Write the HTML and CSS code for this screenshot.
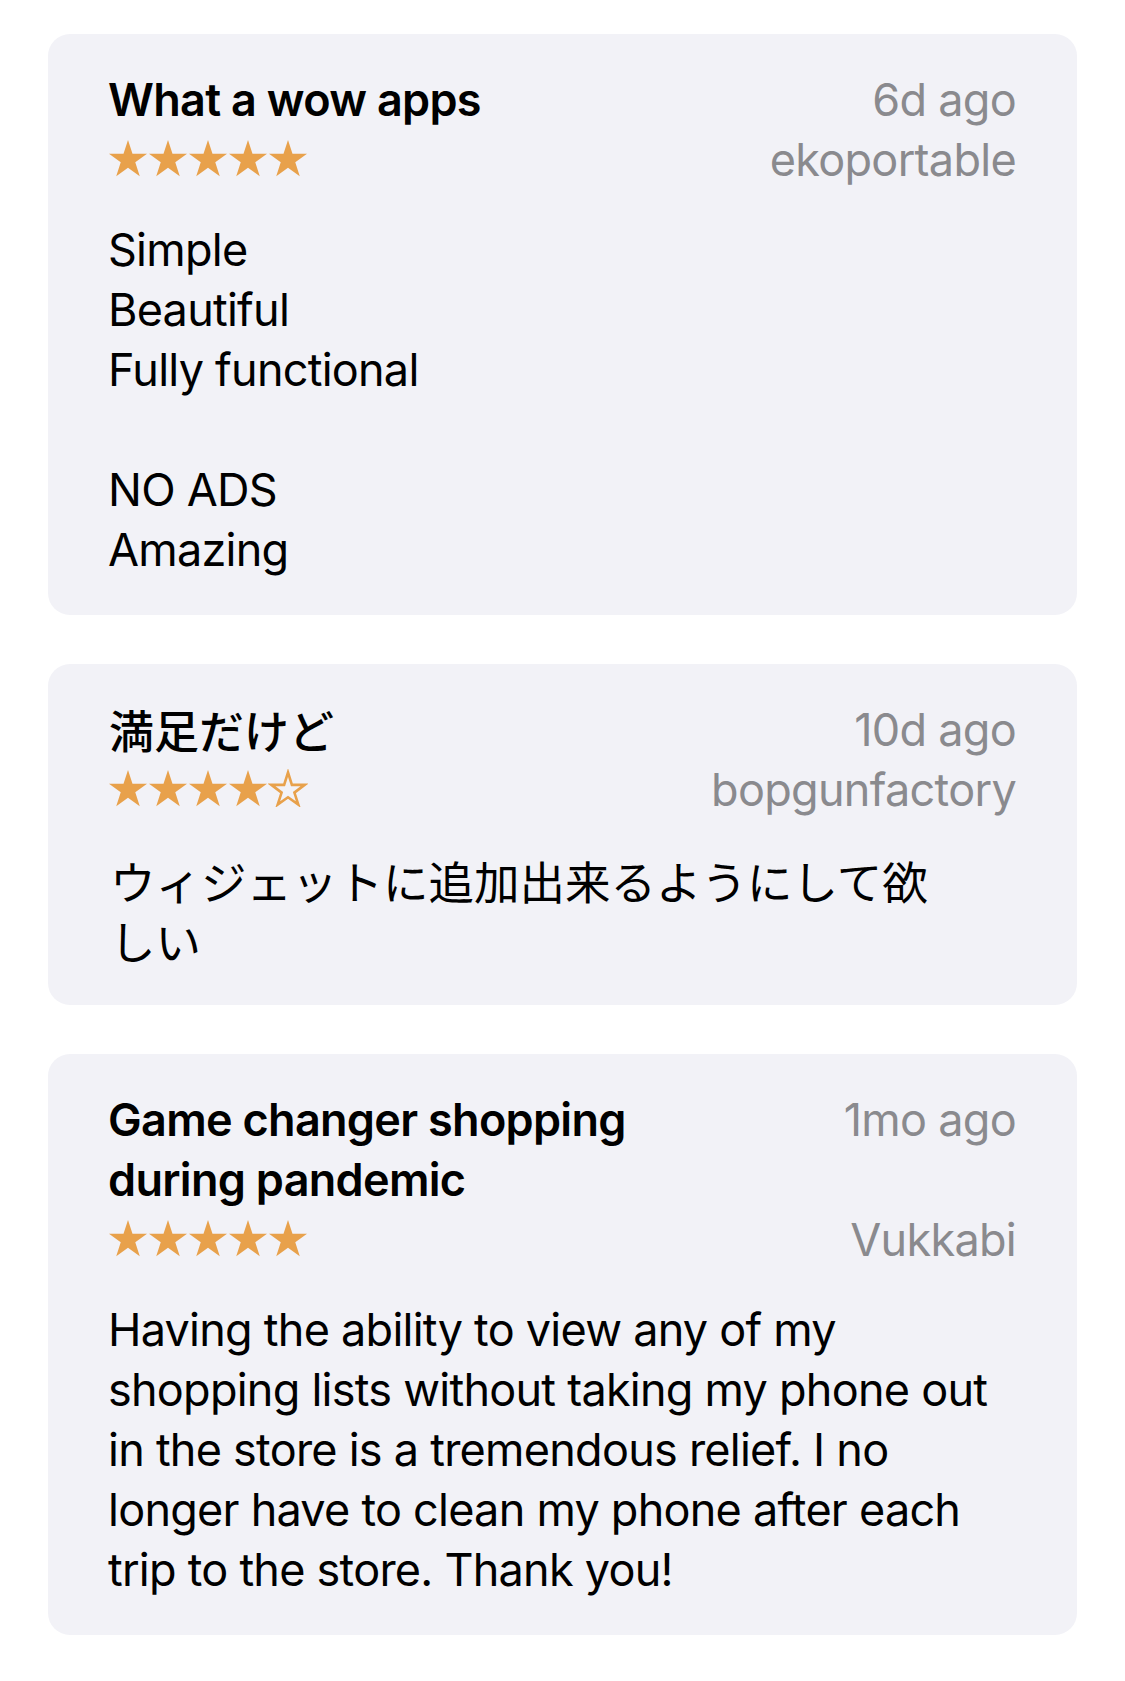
FILE: index.html
```html
<!DOCTYPE html>
<html lang="en">
<head>
<meta charset="utf-8">
<title>Reviews</title>
<link rel="stylesheet" href="styles.css">
</head>
<body>
<svg class="defs" width="0" height="0" aria-hidden="true">
  <defs>
    <symbol id="star-full" viewBox="0 0 40 38">
      <polygon points="20,1 24.49,14.82 39.02,14.82 27.27,23.36 31.76,37.18 20,28.64 8.24,37.18 12.73,23.36 0.98,14.82 15.51,14.82" fill="#e8a14b"/>
    </symbol>
    <symbol id="star-empty" viewBox="0 0 40 38">
      <polygon points="20,3.5 23.9,15.9 36.6,15.9 26.4,23.6 30.3,35.6 20,28.3 9.7,35.6 13.6,23.6 3.4,15.9 16.1,15.9" fill="none" stroke="#e8a14b" stroke-width="2.6" stroke-linejoin="miter"/>
    </symbol>
  </defs>
</svg>
<main class="list">
  <article class="card">
    <header class="head">
      <h2 class="title">What a wow apps</h2>
      <span class="date">6d ago</span>
      <div class="stars" aria-label="5 stars">
        <svg class="star"><use href="#star-full"/></svg><svg class="star"><use href="#star-full"/></svg><svg class="star"><use href="#star-full"/></svg><svg class="star"><use href="#star-full"/></svg><svg class="star"><use href="#star-full"/></svg>
      </div>
      <span class="author">ekoportable</span>
    </header>
    <p class="body">Simple<br>Beautiful<br>Fully functional<br><br>NO ADS<br>Amazing</p>
  </article>

  <article class="card">
    <header class="head">
      <h2 class="title jp">満足だけど</h2>
      <span class="date">10d ago</span>
      <div class="stars" aria-label="4 stars">
        <svg class="star"><use href="#star-full"/></svg><svg class="star"><use href="#star-full"/></svg><svg class="star"><use href="#star-full"/></svg><svg class="star"><use href="#star-full"/></svg><svg class="star"><use href="#star-empty"/></svg>
      </div>
      <span class="author">bopgunfactory</span>
    </header>
    <p class="body jp">ウィジェットに追加出来るようにして欲<br>しい</p>
  </article>

  <article class="card">
    <header class="head">
      <h2 class="title">Game changer shopping<br>during pandemic</h2>
      <span class="date">1mo ago</span>
      <div class="stars" aria-label="5 stars">
        <svg class="star"><use href="#star-full"/></svg><svg class="star"><use href="#star-full"/></svg><svg class="star"><use href="#star-full"/></svg><svg class="star"><use href="#star-full"/></svg><svg class="star"><use href="#star-full"/></svg>
      </div>
      <span class="author">Vukkabi</span>
    </header>
    <p class="body"><span class="ln">Having the ability to view any of my</span><br><span class="ln">shopping lists without taking my phone out</span><br><span class="ln">in the store is a tremendous relief. I no</span><br><span class="ln">longer have to clean my phone after each</span><br><span class="ln">trip to the store. Thank you!</span></p>
  </article>
</main>
</body>
</html>
```

FILE: styles.css
```css
* {
  box-sizing: border-box;
}

html, body {
  margin: 0;
  padding: 0;
  background: #ffffff;
}

body {
  font-family: Inter, "Noto Sans", "Noto Sans CJK JP", sans-serif;
  color: #000000;
  -webkit-font-smoothing: antialiased;
}

.defs {
  position: absolute;
  width: 0;
  height: 0;
  overflow: hidden;
}

.list {
  display: flex;
  flex-direction: column;
  gap: 49px;
  padding: 34px 48px 0 48px;
}

.card {
  background: #f2f2f7;
  border-radius: 22px;
  padding: 36px 61px 35px 60px;
}

.head {
  display: grid;
  grid-template-columns: 1fr auto;
  grid-template-rows: auto 60px;
  column-gap: 24px;
}

.title {
  margin: 0;
  font-size: 45px;
  line-height: 60px;
  font-weight: 600;
  letter-spacing: -0.7px;
}

.title.jp {
  font-family: "Noto Sans CJK JP", sans-serif;
  font-weight: 500;
  letter-spacing: 0;
  margin-left: 1px;
}

.date,
.author {
  justify-self: end;
  text-align: right;
  font-size: 45px;
  line-height: 60px;
  color: #8a8a8e;
  font-weight: 400;
  letter-spacing: -0.7px;
  white-space: nowrap;
}

.date {
  align-self: start;
}

.author {
  align-self: end;
}

.stars {
  display: flex;
  align-self: start;
  margin-top: 9px;
  margin-left: 0;
}

.star {
  width: 40px;
  height: 38px;
  display: block;
}

.body {
  margin: 30px 0 0 0;
  font-size: 45px;
  line-height: 60px;
  font-weight: 400;
  letter-spacing: -0.75px;
}

.body.jp {
  font-family: "Noto Sans CJK JP", sans-serif;
  font-size: 45.5px;
  letter-spacing: 0;
  margin-left: 2px;
}

.ln {
  white-space: nowrap;
}
```
